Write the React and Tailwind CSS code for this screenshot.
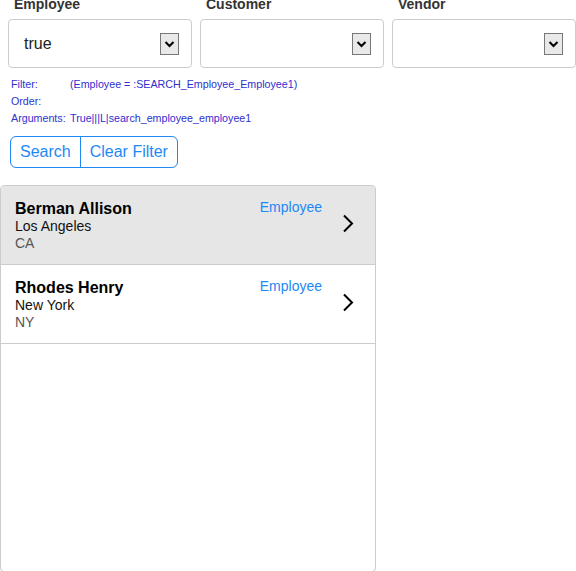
import React from "react";

function Select({ label, value }) {
  return (
    <div className="flex flex-col">
      <div className="h-[19px] pl-[6px] text-[14px] leading-[16px] font-bold text-[#333] -mt-[4px] mb-[4px] overflow-visible">
        {label}
      </div>
      <div className="h-[49px] border border-[#ccc] rounded-[4px] bg-white flex items-center pl-[15px] pr-[12px]">
        <span className="flex-1 text-[16px] text-[#222]">{value}</span>
        <span className="w-[19px] h-[22px] border border-[#777] bg-[#e9e9e9] flex items-center justify-center mt-[1px]">
          <svg width="11" height="8" viewBox="0 0 11 8">
            <path d="M1.5 2 L5.5 6 L9.5 2" fill="none" stroke="#000" strokeWidth="2" />
          </svg>
        </span>
      </div>
    </div>
  );
}

function Row({ name, city, state, type, selected }) {
  return (
    <div
      className={
        "flex items-start border-b border-[#ccc] h-[79px] pl-[14px] pr-[20px] pt-[14px] " +
        (selected ? "bg-[#e6e6e6]" : "bg-white")
      }
    >
      <div className="flex-1">
        <div className="text-[16px] leading-[18px] font-bold text-black">{name}</div>
        <div className="text-[14px] leading-[17px] text-[#111]">{city}</div>
        <div className="text-[14px] leading-[16px] text-[#555]">{state}</div>
      </div>
      <div className="text-[14px] leading-[16px] text-[#1e88f5] -mt-[1px]">{type}</div>
      <div className="ml-[19px] mt-[14px]">
        <svg width="14" height="19" viewBox="0 0 14 19">
          <path d="M3 1.5 L11 9.5 L3 17.5" fill="none" stroke="#000" strokeWidth="2" />
        </svg>
      </div>
    </div>
  );
}

export default function App() {
  return (
    <div
      className="w-[576px] h-[571px] bg-white overflow-hidden"
      style={{ fontFamily: '"Liberation Sans", Arial, sans-serif' }}
    >
      <div className="grid grid-cols-3 gap-[8px] pl-[8px]">
        <Select label="Employee" value="true" />
        <Select label="Customer" value="" />
        <Select label="Vendor" value="" />
      </div>

      <div className="pl-[11px] pt-[8px] text-[10.7px] leading-[17px] text-[#2f2fd0]">
        <div className="flex">
          <span className="w-[59px]">Filter:</span>
          <span>(Employee = :SEARCH_Employee_Employee1)</span>
        </div>
        <div className="flex">
          <span className="w-[59px]">Order:</span>
        </div>
        <div className="flex">
          <span className="w-[59px]">Arguments:</span>
          <span>True|||L|search_employee_employee1</span>
        </div>
      </div>

      <div className="pl-[10px] pt-[9px]">
        <div className="inline-flex h-[32px] border border-[#1e88f5] rounded-[6px] text-[16px] text-[#1e88f5]">
          <span className="flex items-center px-[9px] border-r border-[#1e88f5]">Search</span>
          <span className="flex items-center px-[9px]">Clear Filter</span>
        </div>
      </div>

      <div className="mt-[17px] w-[376px] h-[387px] border border-[#ccc] rounded-[4px] overflow-hidden">
        <Row name="Berman Allison" city="Los Angeles" state="CA" type="Employee" selected />
        <Row name="Rhodes Henry" city="New York" state="NY" type="Employee" />
      </div>
    </div>
  );
}
